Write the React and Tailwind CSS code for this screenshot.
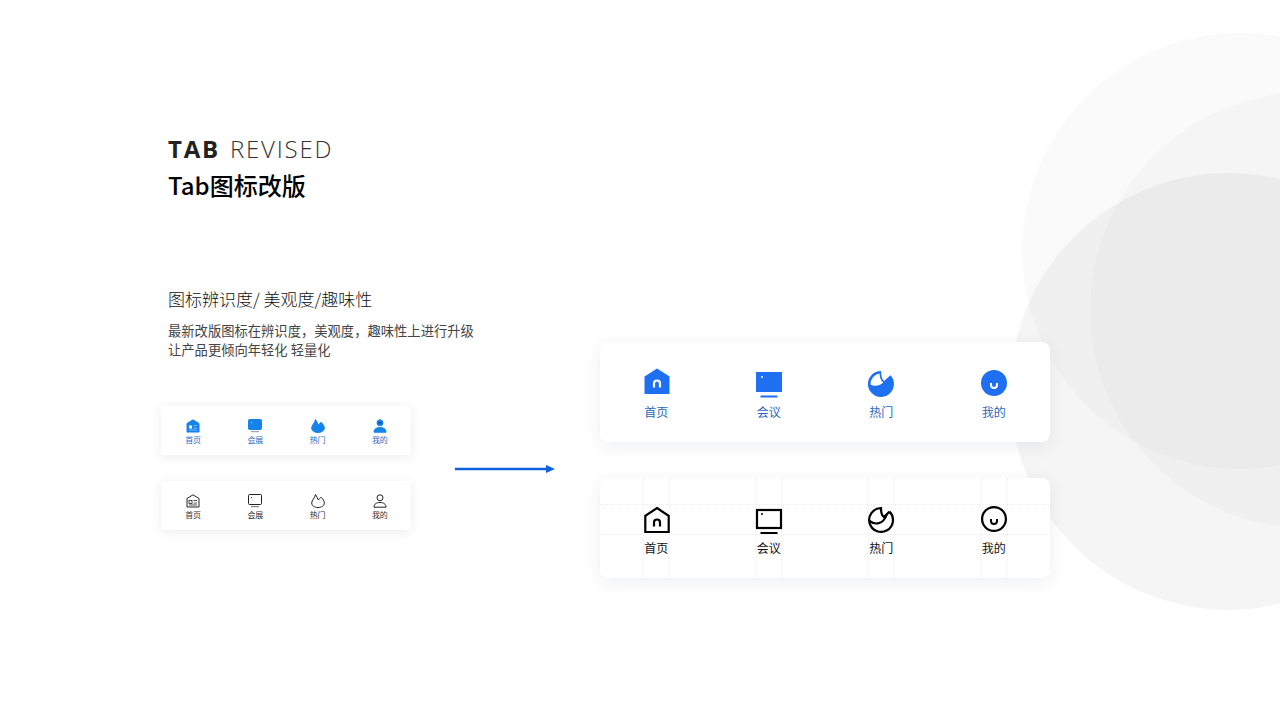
const cjk = "font-['Noto_Sans_CJK_SC','Noto_Sans',sans-serif]";

const BLUE = "#1f6ff2";

// big icons share a 28x32 box, the drawing sits at a different height per state
function HomeIcon({ solid, color }) {
  return (
    <svg width="28" height="32" viewBox="0 0 28 32" className="block">
      <g transform={`translate(2 ${solid ? 2 : 5})`}>
        {solid ? (
          <path d="M13 0.5 L25.5 8.5 V26 H0.5 V8.5 Z" fill={color} />
        ) : (
          <path d="M13 1 L24.7 8.8 V25 H1.3 V8.8 Z" fill="none" stroke={color} strokeWidth="2.2" />
        )}
        <path
          d="M10 19.5 V15.5 a3 3 0 0 1 6 0 V19.5"
          fill="none"
          stroke={solid ? "#fff" : color}
          strokeWidth="2.2"
        />
      </g>
    </svg>
  );
}

function TvIcon({ solid, color }) {
  return (
    <svg width="28" height="32" viewBox="0 0 28 32" className="block">
      {solid ? (
        <rect x="1" y="6" width="26" height="20" fill={color} />
      ) : (
        <rect x="2" y="8" width="24" height="18" fill="none" stroke={color} strokeWidth="2.2" />
      )}
      <rect x="5.5" y={solid ? 29.5 : 30} width="17" height="2" fill={color} />
      <circle cx="7" cy={solid ? 11 : 12} r="1" fill={solid ? "#fff" : color} />
    </svg>
  );
}

function MoonIcon({ solid, color }) {
  return (
    <svg width="28" height="32" viewBox="0 0 28 32" className="block">
      <g transform="translate(1 5)">
        {solid ? (
          <>
            <path d="M22.5 4.2 A13 13 0 1 1 13 0 C13.2 5 14 8.5 16 10 Z" fill={color} />
            <path
              d="M2.5 13.5 A11 11 0 0 1 11.5 2.4 C11.7 6.5 13 10 15.3 11.5 C11 15.5 6 15.5 2.5 13.5 Z"
              fill="#fff"
            />
          </>
        ) : (
          <>
            <path
              d="M21.5 4.6 A11.9 11.9 0 1 1 13 1.1 C13 6 14 9 16 10 L21.5 4.6"
              fill="none"
              stroke={color}
              strokeWidth="2.2"
            />
            <path d="M1.5 14 C7 18 15 18 18.8 7.5" fill="none" stroke={color} strokeWidth="2.2" />
          </>
        )}
      </g>
    </svg>
  );
}

function FaceIcon({ solid, color }) {
  return (
    <svg width="28" height="32" viewBox="0 0 28 32" className="block">
      <g transform="translate(1 4)">
        <circle
          cx="13"
          cy="13"
          r={solid ? 13 : 11.9}
          fill={solid ? color : "none"}
          stroke={solid ? "none" : color}
          strokeWidth="2.2"
        />
        <path
          d="M10 13 V15 a3 3 0 0 0 6 0 V13"
          fill="none"
          stroke={solid ? "#fff" : color}
          strokeWidth="2"
        />
      </g>
    </svg>
  );
}

function SmallHome({ solid, color }) {
  return (
    <svg width="14" height="14" viewBox="0 0 14 14" className="block">
      <path
        d="M7 0.8 L13 4.5 V13 H1 V4.5 Z"
        fill={solid ? color : "none"}
        stroke={color}
        strokeWidth="1"
      />
      <rect x="3" y="6.5" width="3" height="3" fill={solid ? "#fff" : "none"} stroke={solid ? "none" : color} strokeWidth="0.8" />
      <path d="M7.5 6.5 H11 M7.5 9 H11 M3 11 H11" stroke={solid ? "#8fc0fb" : color} strokeWidth="0.8" />
    </svg>
  );
}

function SmallTv({ solid, color }) {
  return (
    <svg width="14" height="14" viewBox="0 0 14 14" className="block">
      <rect x="0.5" y="0.5" width="13" height="10" rx="1" fill={solid ? color : "none"} stroke={color} />
      <rect x="3" y="12" width="8" height="1.2" fill={solid ? "#9aa6b2" : "#888"} />
      <circle cx="3.5" cy="3.5" r="0.6" fill={solid ? "#fff" : color} />
    </svg>
  );
}

function SmallFlame({ solid, color }) {
  return (
    <svg width="14" height="14" viewBox="0 0 14 14" className="block">
      <path
        d="M4.5 0.5 C5.5 2 6.5 4 7.3 6 C8 5 9.2 4.2 10 3.2 C12 5 13.3 7 13.3 9 C13.3 11.8 10.5 13.5 7 13.5 C3.5 13.5 0.7 11.8 0.7 9 C0.7 6 4 4 4.5 0.5 Z"
        fill={solid ? color : "none"}
        stroke={color}
        strokeWidth="1"
        strokeLinejoin="round"
      />
    </svg>
  );
}

function SmallUser({ solid, color }) {
  return (
    <svg width="14" height="14" viewBox="0 0 14 14" className="block">
      <circle cx="7" cy="3.8" r="3" fill={solid ? color : "none"} stroke={color} />
      <path
        d="M1 13.2 C1 10 3.5 8.5 7 8.5 C10.5 8.5 13 10 13 13.2 Z"
        fill={solid ? color : "none"}
        stroke={color}
      />
      {solid && <rect x="5" y="3" width="4" height="1.6" rx="0.8" fill="#0f4fb0" />}
    </svg>
  );
}

const bigTabs = [
  { label: "首页", icon: HomeIcon },
  { label: "会议", icon: TvIcon },
  { label: "热门", icon: MoonIcon },
  { label: "我的", icon: FaceIcon },
];

const smallTabs = [
  { label: "首页", icon: SmallHome },
  { label: "会展", icon: SmallTv },
  { label: "热门", icon: SmallFlame },
  { label: "我的", icon: SmallUser },
];

function SmallBar({ solid, className }) {
  const color = solid ? "#1584ea" : "#222222";
  return (
    <div className={`grid h-[49px] w-[250px] grid-cols-4 bg-white pl-[1px] shadow-[0_2px_10px_rgba(40,50,80,0.09)] ${className}`}>
      {smallTabs.map((tab) => {
        const Icon = tab.icon;
        return (
          <div key={tab.label} className="flex flex-col items-center pt-[13px]">
            <Icon solid={solid} color={color} />
            <span className={`mt-[1px] text-[8px] leading-[12px] ${solid ? "text-[#2a6fc4]" : "text-[#333333]"}`}>
              {tab.label}
            </span>
          </div>
        );
      })}
    </div>
  );
}

function BigBar({ solid, className }) {
  const color = solid ? BLUE : "#000000";
  return (
    <div className={`relative grid h-[100px] w-[450px] grid-cols-4 rounded-[8px] bg-white shadow-[0_4px_18px_rgba(40,50,80,0.08)] ${className}`}>
      {!solid && (
        <div className="absolute inset-x-0 top-[26px] h-[31px] border-y border-dotted border-[#ececec]" />
      )}
      {bigTabs.map((tab) => {
        const Icon = tab.icon;
        return (
          <div key={tab.label} className="relative flex flex-col items-center pt-[24px]">
            {!solid && (
              <div className="absolute inset-y-0 left-1/2 w-[27px] -translate-x-1/2 border-x border-dotted border-[#ececec]" />
            )}
            <div className="relative">
              <Icon solid={solid} color={color} />
            </div>
            <span className={`relative mt-[5px] text-[12px] leading-[18px] ${solid ? "text-[#2c68b8]" : "text-[#111111]"}`}>
              {tab.label}
            </span>
          </div>
        );
      })}
    </div>
  );
}

export default function App() {
  return (
    <div className={`relative h-[720px] w-[1280px] overflow-hidden bg-white ${cjk}`}>
      {/* background circles */}
      <div className="absolute left-[1022px] top-[33px] h-[436px] w-[436px] rounded-full bg-black/[0.02]" />
      <div className="absolute left-[1090px] top-[92px] h-[436px] w-[436px] rounded-full bg-black/[0.02]" />
      <div className="absolute left-[1010px] top-[173px] h-[437px] w-[437px] rounded-full bg-black/[0.038]" />

      <div className="relative flex pl-[161px]">
        <div className="w-[294px] shrink-0">
          <div className="pl-[7px] pt-[134px]">
            <h1 className="font-['Open_Sans',sans-serif] text-[24px] leading-[30px] tracking-[1.8px] text-[#333333]">
              <span className="font-bold text-[#222222]">TAB</span>
              <span className="ml-[10px] font-light">REVISED</span>
            </h1>
            <h2 className="mt-[5px] text-[24px] font-medium leading-[32px] text-black">Tab图标改版</h2>
            <p className="mt-[86px] whitespace-nowrap text-[17px] font-light leading-[24px] text-[#111111]">图标辨识度/ 美观度/趣味性</p>
            <p className="mt-[10px] whitespace-nowrap text-[13.3px] leading-[19px] text-[#444444]">
              最新改版图标在辨识度，美观度，趣味性上进行升级
              <br />
              让产品更倾向年轻化 轻量化
            </p>
          </div>
          <SmallBar solid className="mt-[47px]" />
          <SmallBar className="mt-[26px]" />
        </div>

        <div className="shrink-0 pt-[464px]">
          <svg width="100" height="10" viewBox="0 0 100 10" className="block">
            <path d="M0 5 H92" stroke="#0f62dc" strokeWidth="2.5" />
            <path d="M91 1 L100 5 L91 9 Z" fill="#0f62dc" />
          </svg>
        </div>

        <div className="ml-[45px] shrink-0 pt-[342px]">
          <BigBar solid />
          <BigBar className="mt-[36px]" />
        </div>
      </div>
    </div>
  );
}
